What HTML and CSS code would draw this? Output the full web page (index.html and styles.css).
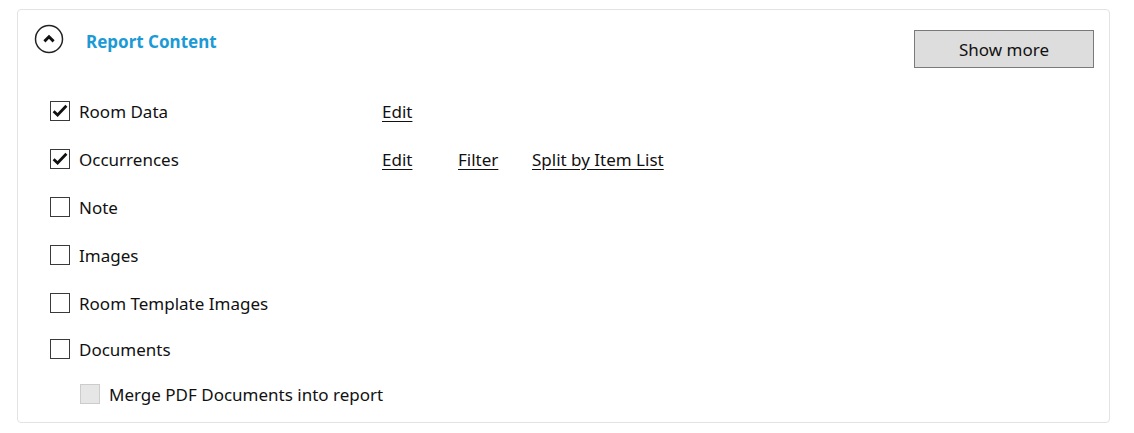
FILE: index.html
```html
<!DOCTYPE html>
<html>
<head>
<meta charset="utf-8">
<link rel="stylesheet" href="styles.css">
</head>
<body>
<div class="panel">
  <div class="header">
    <div class="title-wrap">
      <span class="toggle">
        <svg width="30" height="30" viewBox="0 0 30 30"><circle cx="15" cy="15" r="13.5" fill="none" stroke="#222" stroke-width="1.5"/><path d="M10.4 17.4 L15 12.8 L19.6 17.4" fill="none" stroke="#111" stroke-width="2.9" stroke-linejoin="miter"/></svg>
      </span>
      <span class="title">Report Content</span>
    </div>
    <button class="btn">Show more</button>
  </div>
  <div class="list">
    <div class="row">
      <span class="cb checked"><svg width="16" height="14" viewBox="0 0 16 14"><path d="M1.6 7.2 L5.6 11 L14.4 1.8" fill="none" stroke="#111" stroke-width="2.8"/></svg></span>
      <span class="label">Room Data</span>
      <span class="links"><a class="link edit">Edit</a></span>
    </div>
    <div class="row">
      <span class="cb checked"><svg width="16" height="14" viewBox="0 0 16 14"><path d="M1.6 7.2 L5.6 11 L14.4 1.8" fill="none" stroke="#111" stroke-width="2.8"/></svg></span>
      <span class="label">Occurrences</span>
      <span class="links"><a class="link edit">Edit</a><a class="link filter">Filter</a><a class="link">Split by Item List</a></span>
    </div>
    <div class="row"><span class="cb"></span><span class="label">Note</span></div>
    <div class="row"><span class="cb"></span><span class="label">Images</span></div>
    <div class="row"><span class="cb"></span><span class="label">Room Template Images</span></div>
    <div class="row docs"><span class="cb"></span><span class="label">Documents</span></div>
    <div class="row sub"><span class="cb disabled"></span><span class="label">Merge PDF Documents into report</span></div>
  </div>
</div>
</body>
</html>
```
FILE: styles.css
```css
html, body { margin: 0; padding: 0; background: #fff; }
body {
  font-family: "Noto Sans", "Open Sans", sans-serif;
  color: #111;
  padding: 9px 24px 0 17px;
}
.panel {
  border: 1px solid #e3e3e3;
  border-radius: 4px;
  height: 414px;
  box-sizing: border-box;
  padding: 0 15px 0 17px;
}
.header {
  display: flex;
  justify-content: space-between;
  align-items: flex-start;
  height: 77px;
}
.title-wrap {
  display: flex;
  align-items: center;
  margin-top: 14px;
}
.toggle { display: block; width: 30px; height: 30px; margin-left: -1px; }
.toggle svg { display: block; }
.title {
  margin-left: 22px;
  color: #1b9ad6;
  font-weight: 700;
  font-size: 17px;
  position: relative;
  top: 2px;
}
.btn {
  margin-top: 20px;
  width: 180px;
  height: 38px;
  background: #dddddd;
  border: 1px solid #7a7a7a;
  font-family: "Noto Sans", "Open Sans", sans-serif;
  font-size: 17px;
  color: #111;
  padding: 0;
}
.list { padding-left: 15px; }
.row {
  display: flex;
  align-items: center;
  height: 48px;
  font-size: 17px;
}
.row.docs { height: 44px; }
.row.sub { height: 46px; padding-left: 30px; }
.cb {
  width: 20px; height: 20px;
  box-sizing: border-box;
  border: 1px solid #3a3a3a;
  display: flex; align-items: center; justify-content: center;
  flex: none;
}
.cb.disabled { background: #e6e6e6; border-color: #cccccc; }
.label { margin-left: 9px; width: 303px; }
.links { display: flex; }
.link { text-decoration: underline; color: #111; text-underline-offset: 3px; }
.link.edit { width: 76px; }
.link.filter { width: 74px; }
```
